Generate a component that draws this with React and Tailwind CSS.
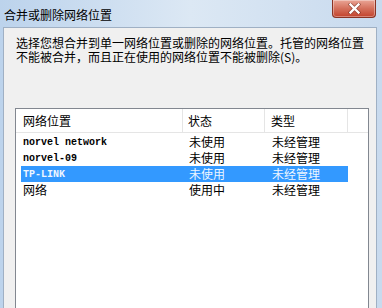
const rows = [
    { name: "norvel network", mono: true, status: "未使用", type: "未经管理" },
    { name: "norvel-09", mono: true, status: "未使用", type: "未经管理" },
    { name: "TP-LINK", mono: true, status: "未使用", type: "未经管理", selected: true },
    { name: "网络", mono: false, status: "使用中", type: "未经管理" },
];

const cjk = "font-['Noto_Sans_CJK_SC',sans-serif]";
const mono = "font-['Liberation_Mono','Noto_Sans_CJK_SC',monospace]";

function CloseButton() {
    return (
        <div className="absolute top-0 right-[6px] w-[44px] h-[18px] rounded-b-[4px] border border-t-0 border-[#8a3324] bg-gradient-to-b from-[#e9a596] via-[#d4705c] to-[#c2412b] flex items-center justify-center shadow-[inset_0_0_0_1px_rgba(255,255,255,0.35)]">
            <svg width="13" height="11" viewBox="0 0 13 11">
                <path d="M2.5 1.5 L10.5 9.5 M10.5 1.5 L2.5 9.5" stroke="#5b1a10" strokeWidth="3.8" strokeLinecap="square" opacity="0.5" />
                <path d="M2.5 1.5 L10.5 9.5 M10.5 1.5 L2.5 9.5" stroke="#ffffff" strokeWidth="2.4" strokeLinecap="square" />
            </svg>
        </div>
    );
}

export default function App() {
    return (
        <div className={`relative w-[382px] h-[308px] overflow-hidden flex flex-col bg-gradient-to-r from-[#bcd3ec] via-[#dce8f4] to-[#c8daee] ${cjk}`}>
            {/* title bar */}
            <div className="h-[27px] shrink-0 flex items-center pl-[4px] pt-[1px]">
                <span className="text-[12px] leading-[13px] text-black">合并或删除网络位置</span>
            </div>
            <CloseButton />

            {/* dialog body */}
            <div className="flex-1 ml-[3px] mr-[5px] border border-[#9fb0c4] border-b-0 bg-[#f0f0f0] flex flex-col min-h-0">
                <div className="pt-[8px] pl-[12px] text-[12px] leading-[14px] text-black whitespace-nowrap">
                    <p>选择您想合并到单一网络位置或删除的网络位置。托管的网络位置</p>
                    <p>不能被合并，而且正在使用的网络位置不能被删除(S)。</p>
                </div>

                <div className="mt-[44px] ml-[11px] mr-[7px] flex-1 border border-b-0 border-[#828790] bg-white flex flex-col">
                    {/* header */}
                    <div className="h-[24px] shrink-0 flex border-b border-[#e5e5e5] text-[12px] text-black">
                        <div className="w-[167px] pl-[7px] flex items-center border-r border-[#e5e5e5]">网络位置</div>
                        <div className="w-[82px] pl-[5px] flex items-center border-r border-[#e5e5e5]">状态</div>
                        <div className="w-[83px] pl-[6px] flex items-center border-r border-[#e5e5e5]">类型</div>
                        <div className="flex-1" />
                    </div>

                    {/* rows */}
                    <div className="pt-[1px] pl-[5px] flex flex-col">
                        {rows.map((r) => (
                            <div key={r.name} className={`w-[327px] h-[16px] flex items-center text-[12px] ${r.selected ? "bg-[#3399ff] text-[#eef6ff]" : "text-black"}`}>
                                <div className={`w-[162px] pl-[2px] ${r.mono ? `${mono} text-[10px] font-bold` : ""}`}>{r.name}</div>
                                <div className="w-[82px] pl-[6px]">{r.status}</div>
                                <div className="w-[83px] pl-[7px]">{r.type}</div>
                            </div>
                        ))}
                    </div>
                </div>
            </div>
        </div>
    );
}
